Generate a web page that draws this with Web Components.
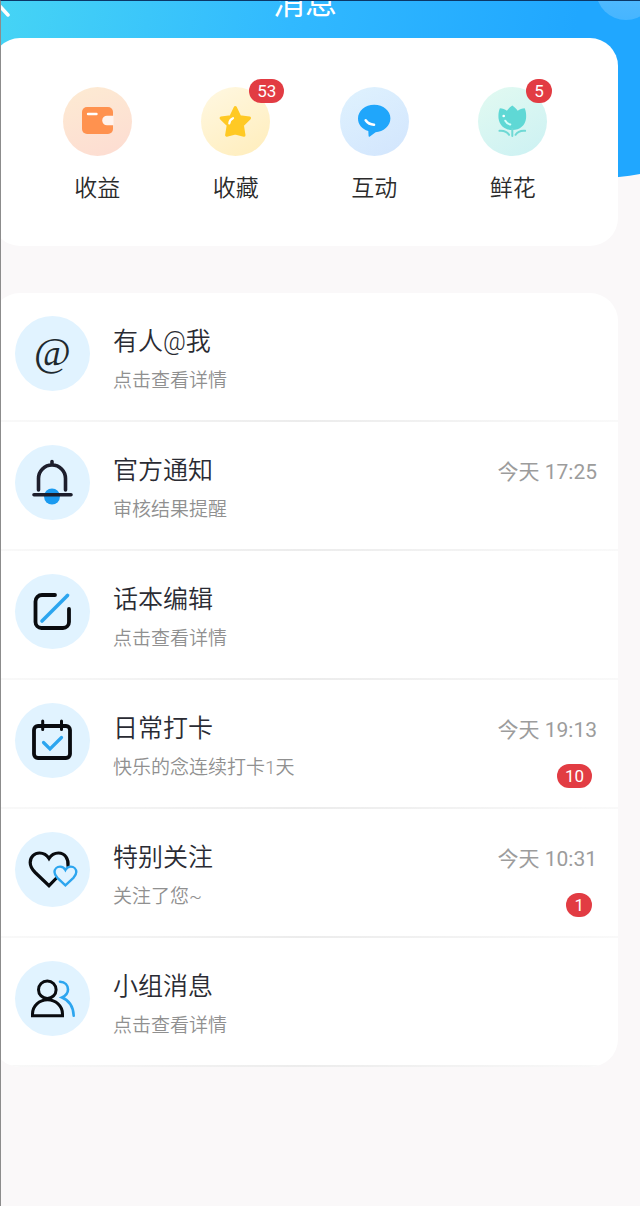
<!DOCTYPE html>
<html lang="zh-CN">
<head>
<meta charset="utf-8">
<meta name="viewport" content="width=device-width, initial-scale=1">
<title>消息</title>
<style>
  body {
    margin: 0;
    background: #faf8f9;
    color: #2a2b33;
    font-family: Roboto, "Noto Sans CJK SC", sans-serif;
    font-weight: 350;
  }
</style>
</head>
<body>
<message-page>
  <page-header slot="header" title="消息"></page-header>
  <quick-menu>
    <quick-item icon="wallet" label="收益"></quick-item>
    <quick-item icon="star" label="收藏" count="53"></quick-item>
    <quick-item icon="bubble" label="互动"></quick-item>
    <quick-item icon="tulip" label="鲜花" count="5"></quick-item>
  </quick-menu>
  <message-list>
    <message-row icon="at" label="有人@我">点击查看详情</message-row>
    <message-row icon="bell" label="官方通知" time="今天 17:25">审核结果提醒</message-row>
    <message-row icon="edit" label="话本编辑">点击查看详情</message-row>
    <message-row icon="calendar" label="日常打卡" time="今天 19:13" count="10">快乐的念连续打卡1天</message-row>
    <message-row icon="hearts" label="特别关注" time="今天 10:31" count="1">关注了您~</message-row>
    <message-row icon="group" label="小组消息">点击查看详情</message-row>
  </message-list>
</message-page>

<script>
const quickIcons = {
  wallet: `
    <rect x="19" y="20" width="31" height="27" rx="5" fill="#ff924f"/>
    <path d="M50.5 28.7H44a4.8 4.8 0 0 0 0 9.6h6.5z" fill="#fff3ed"/>
    <path d="M25 27h8.5" stroke="#fff" stroke-width="2.4"/>`,
  star: `
    <path d="M34.3 20.5l4.4 9.2 9.8 1.4-7.1 7.1 1.6 10-8.7-2.2-8.7 2.2 1.6-10-7.1-7.1 9.8-1.4z"
      fill="#ffc924" stroke="#ffc924" stroke-width="3"/>
    <path d="M28.3 36.5c.2-2.7 1.4-4.4 3.7-5.3" stroke="#fff" stroke-width="2.2"/>`,
  bubble: `
    <path d="M34.2 17.8c9 0 16.2 6 16.2 13.4 0 8-7.2 13.6-14.8 14l-5.7 4.3c-.8.5-1.3.2-1.3-.6l-.3-4.8C21.8 42 18 37.4 18 31.5 18 24 25.2 17.8 34.2 17.8z" fill="#20a6fb"/>
    <path d="M25.7 33.3c1.9 2.8 4.5 4.3 8.3 4.4" stroke="#fff" stroke-width="2.6"/>`,
  tulip: `
    <path d="M34.3 18.5c2.3 1.6 4 3.2 5.4 5.3 2-1.4 4.3-2.3 7-2.5 1.4 3 1.7 7 1.3 10.4-.8 6.5-6 11.3-13.7 11.3S21.4 38.2 20.6 31.7c-.4-3.4-.1-7.4 1.3-10.4 2.7.2 5 1.1 7 2.5 1.4-2.1 3.1-3.7 5.4-5.3z" fill="#5fd8d5"/>
    <path d="M34.3 42v7M21.5 43.8c4.5-.4 7.5.8 9.5 4M47.1 43.8c-4.5-.4-7.5.8-9.5 4" stroke="#6fd9d5" stroke-width="2"/>
    <circle cx="25.7" cy="29" r="1.3" fill="#fff"/>
    <path d="M27.3 33.7c1 2 2.5 3.2 5 3.8" stroke="#d5fffb" stroke-width="2"/>`
};

const rowIcons = {
  bell: `
    <circle cx="37" cy="51.5" r="8" fill="#1a9af0"/>
    <path d="M37 16.5v3M23.5 45V33.5a13.5 13.5 0 0 1 27 0V45M19 49.7h37" stroke="#1d1e2c" stroke-width="3.6"/>`,
  edit: `
    <path d="M40 21H27a6.5 6.5 0 0 0-6.5 6.5V48a6 6 0 0 0 6 6H48a6 6 0 0 0 6-6V35" stroke="#090b0f" stroke-width="3.8"/>
    <path d="M27 47l25.5-25.5" stroke="#2ca5ef" stroke-width="3.6"/>`,
  calendar: `
    <rect x="19" y="23" width="36" height="32" rx="4" stroke="#090b0f" stroke-width="3.8"/>
    <path d="M27.7 18v8.5M46.5 18v8.5" stroke="#090b0f" stroke-width="3"/>
    <path d="M28.5 39.5l6.5 6.5 11.5-11.5" stroke="#2ca5ef" stroke-width="3.2"/>`,
  hearts: `
    <path d="M53 34c.8-7-3-13-9.5-13-4 0-7.5 2.2-9.5 5.5-2-3.3-5.5-5.5-9.5-5.5-5 0-9.3 4-9.3 9.5 0 4 2 7 5 10L34 53.7l7-7.2" stroke="#090b0f" stroke-width="3.2"/>
    <path d="M50.4 38c-1.2-2.3-3.2-3.4-5.3-3.4-3.2 0-5.6 2.5-5.6 5.5 0 2.3 1.2 4 2.9 5.7l8 7.5 8-7.5c1.7-1.7 2.9-3.4 2.9-5.7 0-3-2.4-5.5-5.6-5.5-2.1 0-4.1 1.1-5.3 3.4z" fill="#e1f3ff" stroke="#2ca5ef" stroke-width="2.4"/>`,
  group: `
    <circle cx="32.3" cy="28.7" r="8.8" stroke="#090b0f" stroke-width="3"/>
    <path d="M17.5 54.7V53c0-8 6.8-14.2 15-14.2S47.5 45 47.5 53v1.7z" stroke="#090b0f" stroke-width="3"/>
    <path d="M45 20.7c5 .3 8 3.7 8 7.8 0 3.8-2.5 6.3-6 8 7 2.8 11.3 9.5 11.7 18.2" stroke="#2ca5ef" stroke-width="2.6"/>`
};

class CountBadge extends HTMLElement {
  constructor() {
    super();
    this.attachShadow({ mode: "open" }).innerHTML = `
      <style>
        :host {
          display: block;
          box-sizing: border-box;
          min-width: 24px;
          height: 24px;
          padding: 0 8px;
          border-radius: 12px;
          background: #e23c43;
          color: #fff;
          font-size: 17px;
          font-weight: 400;
          line-height: 24px;
          text-align: center;
        }
      </style>
      <slot></slot>
    `;
  }
}
customElements.define("count-badge", CountBadge);

class PageHeader extends HTMLElement {
  connectedCallback() {
    this.attachShadow({ mode: "open" }).innerHTML = `
      <style>
        :host {
          display: block;
          padding-bottom: 15px;
        }
        /* scrolled partly past the top edge */
        nav {
          display: grid;
          grid-template-columns: 1fr auto 1fr;
          align-items: center;
          height: 40px;
          margin-top: -18px;
        }
        h1 {
          margin: 0;
          color: #fff;
          font-size: 32px;
          font-weight: 400;
          line-height: 40px;
        }
        button {
          justify-self: start;
          padding: 0;
          border: 0;
          background: none;
        }
        svg {
          display: block;
        }
      </style>
      <nav>
        <button type="button" aria-label="返回">
          <svg width="20" height="32" viewBox="0 0 20 32" fill="none" stroke="#fff" stroke-width="3.5" stroke-linecap="round">
            <path d="M16 4L5 16l11 12"/>
          </svg>
        </button>
        <h1>${this.getAttribute("title")}</h1>
      </nav>
    `;
  }
}
customElements.define("page-header", PageHeader);

class QuickItem extends HTMLElement {
  connectedCallback() {
    const count = this.getAttribute("count");
    const icon = this.getAttribute("icon");
    this.attachShadow({ mode: "open" }).innerHTML = `
      <style>
        :host {
          display: flex;
          justify-content: center;
        }
        button {
          display: flex;
          flex-direction: column;
          align-items: center;
          gap: 17px;
          padding: 0;
          border: 0;
          background: none;
          color: #2b2b2b;
          font: inherit;
          font-size: 23px;
          line-height: 32px;
        }
        .disc {
          position: relative;
          width: 69px;
          height: 69px;
          border-radius: 50%;
        }
        .wallet { background: linear-gradient(160deg, #fdebd3, #fddcd2); }
        .star { background: linear-gradient(150deg, #fff8e2, #ffedbb); }
        .bubble { background: linear-gradient(150deg, #dff2fe, #d2e5fd); }
        .tulip { background: linear-gradient(150deg, #e2faf1, #ccf1f3); }
        svg {
          display: block;
        }
        count-badge {
          position: absolute;
          top: -8px;
          left: 48px;
        }
      </style>
      <button type="button">
        <span class="disc ${icon}">
          <svg width="69" height="69" viewBox="0 0 69 69" fill="none" stroke-linecap="round" stroke-linejoin="round">${quickIcons[icon]}</svg>
          ${count ? `<count-badge>${count}</count-badge>` : ""}
        </span>
        <span>${this.getAttribute("label")}</span>
      </button>
    `;
  }
}
customElements.define("quick-item", QuickItem);

class QuickMenu extends HTMLElement {
  constructor() {
    super();
    this.attachShadow({ mode: "open" }).innerHTML = `
      <style>
        :host {
          display: grid;
          grid-template-columns: repeat(4, 1fr);
          padding: 49px 36px 41px;
          border-radius: 28px;
          background: #fff;
        }
      </style>
      <slot></slot>
    `;
  }
}
customElements.define("quick-menu", QuickMenu);

class MessageRow extends HTMLElement {
  connectedCallback() {
    const icon = this.getAttribute("icon");
    const time = this.getAttribute("time");
    const count = this.getAttribute("count");
    const picture = icon === "at"
      ? "@"
      : `<svg width="75" height="75" viewBox="0 0 75 75" fill="none" stroke-linecap="round">${rowIcons[icon]}</svg>`;

    this.attachShadow({ mode: "open" }).innerHTML = `
      <style>
        :host {
          display: block;
        }
        a {
          display: flex;
          gap: 23px;
          min-height: 86px;
          padding: 23px 21px 18px 23px;
          color: inherit;
          text-decoration: none;
        }
        .disc {
          flex: none;
          width: 75px;
          height: 75px;
          border-radius: 50%;
          background: #e1f3ff;
          color: #20292e;
          font-family: "Liberation Serif", serif;
          font-size: 40px;
          line-height: 72px;
          text-align: center;
        }
        svg {
          display: block;
        }
        .text {
          flex: 1;
          min-width: 0;
          padding-top: 10px;
        }
        h2, p {
          margin: 0;
          font-weight: inherit;
        }
        h2 {
          font-size: 25px;
          line-height: 32px;
        }
        p {
          margin-top: 10px;
          color: #909090;
          font-size: 19px;
          line-height: 26px;
        }
        .side {
          display: flex;
          flex-direction: column;
          align-items: flex-end;
          gap: 18px;
          padding-top: 11px;
        }
        time {
          color: #9c9c9c;
          font-size: 21px;
          font-weight: 400;
          line-height: 32px;
        }
        count-badge {
          margin-right: 5px;
        }
        .line {
          height: 2px;
          background: linear-gradient(90deg, #f9f9f9, #ececec 50%, #f9f9f9);
        }
      </style>
      <a href="#${icon}">
        <span class="disc">${picture}</span>
        <div class="text">
          <h2>${this.getAttribute("label")}</h2>
          <p><slot></slot></p>
        </div>
        <div class="side">
          ${time ? `<time>${time}</time>` : ""}
          ${count ? `<count-badge>${count}</count-badge>` : ""}
        </div>
      </a>
      <div class="line"></div>
    `;
  }
}
customElements.define("message-row", MessageRow);

class MessageList extends HTMLElement {
  constructor() {
    super();
    this.attachShadow({ mode: "open" }).innerHTML = `
      <style>
        :host {
          display: block;
          margin-top: 47px;
          border-radius: 28px;
          background: #fff;
          overflow: hidden;
        }
      </style>
      <slot></slot>
    `;
  }
}
customElements.define("message-list", MessageList);

class MessagePage extends HTMLElement {
  constructor() {
    super();
    this.attachShadow({ mode: "open" }).innerHTML = `
      <style>
        :host {
          display: block;
          position: relative;
          box-sizing: border-box;
          min-height: 100vh;
          border-top: 1px solid #0b3767;
          border-left: 1px solid #8c8c8c;
          overflow: hidden;
        }
        .sky {
          position: absolute;
          top: 0;
          left: 0;
          width: 100%;
          height: 180px;
        }
        .bubble {
          position: absolute;
          top: -41px;
          right: -16px;
          width: 60px;
          height: 60px;
          border-radius: 50%;
          background: linear-gradient(#5fc0ff, #46b5ff);
        }
        .content {
          position: relative;
          margin: 0 22px 0 -9px;
        }
      </style>
      <svg class="sky" viewBox="0 0 640 180" preserveAspectRatio="none">
        <linearGradient id="blue" gradientUnits="userSpaceOnUse" x1="0" y1="40" x2="560" y2="130">
          <stop offset="0" stop-color="#45d3f5"/>
          <stop offset=".5" stop-color="#31b9ff"/>
          <stop offset="1" stop-color="#20a7ff"/>
        </linearGradient>
        <path d="M0 0H640V173Q600 180 540 180H0z" fill="url(#blue)"/>
      </svg>
      <div class="bubble"></div>
      <div class="content">
        <slot name="header"></slot>
        <main><slot></slot></main>
      </div>
    `;
  }
}
customElements.define("message-page", MessagePage);
</script>
</body>
</html>
